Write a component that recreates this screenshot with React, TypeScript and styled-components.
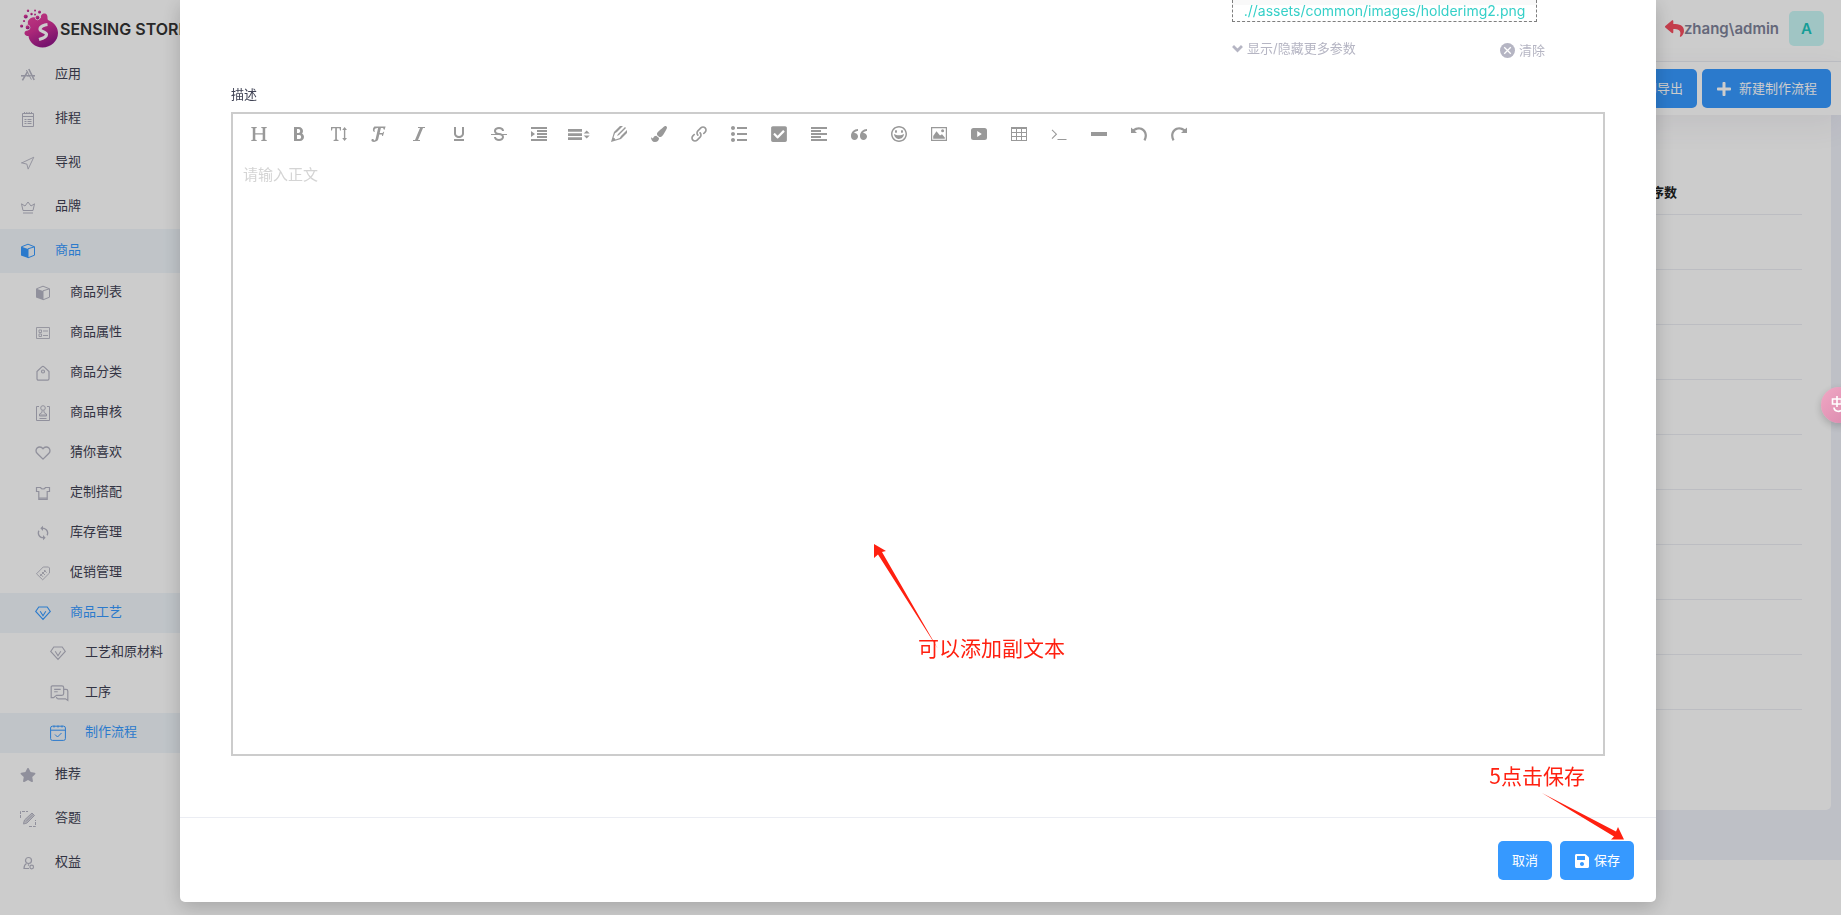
import React from 'react';
import styled, { createGlobalStyle } from 'styled-components';
import {
  ImBold, ImItalic, ImUnderline, ImStrikethrough, ImIndentIncrease, ImPencil2, ImLink, ImList2,
  ImParagraphLeft, ImQuotesLeft, ImHappy, ImTable2,
} from 'react-icons/im';
import { FaPaintBrush, FaPlus, FaReply, FaSave, FaStar, FaCheckSquare } from 'react-icons/fa';
import { FiHeart, FiNavigation } from 'react-icons/fi';
import { MdSync } from 'react-icons/md';

const GlobalStyle = createGlobalStyle`
  *, *::before, *::after { box-sizing: border-box; }
  body {
    margin: 0;
    background: #eef0f8;
    color: #3f4254;
    font-family: Inter, "Noto Sans CJK SC", sans-serif;
    font-size: 13px;
    line-height: 20px;
  }
  button, textarea { font: inherit; }
  a { text-decoration: none; color: inherit; }
`;

const Page = styled.div`
  display: flex;
  min-height: 100vh;
`;

const Aside = styled.aside`
  flex: 0 0 260px;
  background: #fff;
`;

const Brand = styled.a`
  display: flex;
  align-items: center;
  gap: 1px;
  height: 53px;
  padding: 4px 0 0 20px;
  color: #333;
  font-size: 16px;
  font-weight: 600;
  white-space: nowrap;
`;

const MenuLink = styled.a<{ $level: number; $active?: boolean }>`
  display: flex;
  align-items: center;
  gap: 19px;
  height: ${p => (p.$level ? 40 : 44)}px;
  padding-bottom: 4px;
  padding-left: ${p => 20 + p.$level * 15}px;
  background: ${p => (p.$active ? '#f0f6fb' : 'transparent')};
  color: ${p => (p.$active ? '#3699ff' : '#3f4254')};
`;

const MenuIcon = styled.span<{ $active?: boolean }>`
  display: flex;
  width: 16px;
  padding-top: 4px;
  color: ${p => (p.$active ? '#3699ff' : '#b5b5c3')};
  svg { flex: none; }
`;

const Main = styled.main`
  flex: 1;
  display: flex;
  flex-direction: column;
  min-width: 0;
`;

const Header = styled.header`
  display: flex;
  align-items: center;
  justify-content: flex-end;
  height: 62px;
  padding: 0 17px 4px 0;
  border-bottom: 1px solid #ebedf3;
  background: #fff;
`;

const UserName = styled.span`
  color: #7e8299;
  font-size: 15px;
  font-weight: 600;
`;

const ReplyLink = styled.a`
  display: flex;
  color: #f64e60;
`;

const Avatar = styled.span`
  display: grid;
  place-items: center;
  width: 35px;
  height: 35px;
  margin-left: 10px;
  border-radius: 5px;
  background: #c9f7f5;
  color: #1bc5bd;
  font-size: 15px;
  font-weight: 600;
`;

const SubHeader = styled.div`
  position: relative;
  display: flex;
  align-items: center;
  justify-content: flex-end;
  gap: 5px;
  height: 53px;
  padding-right: 10px;
  background: #fff;
  box-shadow: 0 10px 30px rgba(82, 63, 105, 0.08);
`;

const PrimaryButton = styled.button<{ $gap?: number }>`
  display: inline-flex;
  align-items: center;
  gap: ${p => p.$gap ?? 0}px;
  height: 39px;
  padding: 0 14px 2px;
  border: 0;
  border-radius: 5px;
  background: #3699ff;
  color: #fff;
  cursor: pointer;
  svg { margin-top: 2px; }
`;

const Content = styled.section`
  flex: 1;
  display: flex;
  padding: 0 10px 50px;
`;

const Card = styled.div`
  flex: 1;
  padding: 56px 29px 0;
  border-radius: 0 0 5px 5px;
  background: #fff;
`;

const Table = styled.table`
  width: 100%;
  border-collapse: collapse;
  text-align: left;
  th { height: 43px; padding: 0; border-bottom: 1px solid #ebedf3; color: #212121; font-weight: 600; }
  td { height: 55px; padding: 0; border-bottom: 1px solid #ebedf3; }
  th:last-child { width: 164px; }
`;

const PageFooter = styled.footer`
  height: 55px;
  background: #fff;
`;

const Overlay = styled.div`
  position: fixed;
  inset: 0;
  overflow: auto;
  padding: 0 185px 13px 180px;
  background: rgba(0, 0, 0, 0.2);
`;

const Dialog = styled.div`
  position: relative;
  border-radius: 0 0 5px 5px;
  background: #fff;
  box-shadow: 0 5px 20px rgba(0, 0, 0, 0.2);
`;

const DialogBody = styled.div`
  padding: 0 51px 61px;
`;

const Upload = styled.div`
  width: 313px;
  margin: 0 60px 24px auto;
`;

const UploadBox = styled.div`
  width: 305px;
  height: 22px;
  margin-bottom: 18px;
  border: 1px dashed #7e7e7e;
  border-top: 0;
  background: linear-gradient(#f9f9f9 5px, #fff 5px);
  color: #36d0c8;
  font-size: 14px;
  line-height: 22px;
  text-align: center;
  white-space: nowrap;
`;

const UploadActions = styled.div`
  display: flex;
  align-items: flex-start;
  justify-content: space-between;
`;

const TextButton = styled.button<{ $line: number }>`
  display: flex;
  align-items: center;
  gap: 4px;
  padding: 0;
  border: 0;
  background: none;
  color: #b5b5c3;
  line-height: ${p => p.$line}px;
  cursor: pointer;
`;

const Label = styled.label`
  display: block;
  margin-bottom: 8px;
`;

const Editor = styled.div`
  border: 2px solid #ccc;
`;

const Toolbar = styled.div`
  display: flex;
  flex-wrap: wrap;
  padding: 0 6px;
`;

const ToolButton = styled.button`
  display: grid;
  place-items: center;
  width: 40px;
  height: 40px;
  padding: 0;
  border: 0;
  background: none;
  color: #999;
  cursor: pointer;
`;

const EditorText = styled.textarea`
  display: block;
  width: 100%;
  height: 600px;
  padding: 10px;
  border: 0;
  outline: 0;
  resize: none;
  background: none;
  color: #3f4254;
  font-size: 15px;
  line-height: 22px;
  &::placeholder { color: #d4d4d4; opacity: 1; }
`;

const DialogFooter = styled.footer`
  display: flex;
  justify-content: flex-end;
  gap: 8px;
  padding: 23px 22px 22px;
  border-top: 1px solid #ebedf3;
`;

const Note = styled.p<{ $right: number; $bottom: number }>`
  position: absolute;
  right: ${p => p.$right}px;
  bottom: ${p => p.$bottom}px;
  margin: 0;
  color: #ff2010;
  font-family: "Noto Sans CJK SC", sans-serif;
  font-size: 21px;
  line-height: 30px;
  pointer-events: none;
`;

const NoteArrow = styled.svg<{ $right: number; $bottom: number }>`
  position: absolute;
  right: ${p => p.$right}px;
  bottom: ${p => p.$bottom}px;
  fill: #ff2010;
  pointer-events: none;
`;

const FloatButton = styled.button`
  position: fixed;
  top: 387px;
  right: -16px;
  display: grid;
  place-items: center;
  width: 36px;
  height: 36px;
  padding: 0;
  border: 0;
  border-radius: 50%;
  background: linear-gradient(135deg, #f0a8c4, #d987ac);
  box-shadow: 0 3px 8px rgba(0, 0, 0, 0.2);
  cursor: pointer;
`;

type GlyphProps = { children: React.ReactNode; size?: number; fill?: boolean; width?: number };

const Glyph = ({ children, size = 16, fill, width = 1 }: GlyphProps) => (
  <svg
    width={size}
    height={size}
    viewBox="0 0 16 16"
    fill={fill ? 'currentColor' : 'none'}
    stroke={fill ? 'none' : 'currentColor'}
    strokeWidth={width}
    aria-hidden="true"
  >
    {children}
  </svg>
);

const AppsIcon = () => (
  <Glyph width={1.6}><path d="M8.8 2l5.4 11M7.6 4.6L2.4 13.4M1 8.7h3.4M6.6 8.7h3.6M11.6 8.7H15" /><path d="M1 8.7h14M6.4 3l5 9.6" strokeWidth="1" /></Glyph>
);
const ScheduleIcon = () => (
  <Glyph><path d="M2.5 2.5h11v13h-11zM2.5 5.5h11M4.5 1v2M6.8 1v2M9.2 1v2M11.5 1v2M4.5 8.5h2M7.5 8.5h4M4.5 10.5h2M7.5 10.5h4M4.5 12.5h2M7.5 12.5h4" /></Glyph>
);
const CrownIcon = () => (
  <Glyph><path d="M3 11.5L1.5 4.8 5 7l3-4 3 4 3.5-2.2L13 11.5zM3 14h10" /></Glyph>
);
const CubeIcon = () => (
  <Glyph><path d="M1.5 3.8L8 1.2l6.5 2.6v8.4L8 14.8M8 5.8l6.5-2M8 5.8v9" /><path d="M1 3.6l7 2.4v9L1 12.4z" fill="currentColor" stroke="none" /></Glyph>
);
const AttributesIcon = () => (
  <Glyph width={0.9}><path d="M1.5 2.5h13v11h-13zM4 5h2.5v2.5H4zM4 9h2.5v2.5H4zM8 6h5M8 10.5h5" /></Glyph>
);
const CategoryIcon = () => (
  <Glyph width={1.2}><path d="M2 6.5l4.8-4.6a1.6 1.6 0 012.3 0L14 6.5v7.3a1.4 1.4 0 01-1.4 1.4H3.4A1.4 1.4 0 012 13.8z" /><circle cx="8" cy="6.5" r="1.5" /></Glyph>
);
const ReviewIcon = () => (
  <Glyph><path d="M4 1.5H1.5v14h13v-14H12M7 5.5v2L4.5 9v2h7V9L9 7.5v-2M4.5 13.5h7" /><circle cx="8" cy="3" r="2.3" /><path d="M5 9h6v2H5z" fill="currentColor" fillOpacity="0.5" stroke="none" /></Glyph>
);
const ShirtIcon = () => (
  <Glyph width={1.2}><path d="M5.5 2.5H1.5v4h2.3v8h8.4v-8h2.3v-4h-4c-.8 2-4.2 2-5 0zM4 13.2h8" /></Glyph>
);
const TagIcon = () => (
  <Glyph width={0.9}><path d="M1.5 8.8L8.2 2h5.3l1 1v5L7.7 14.8zM5 8.8l3 3M7 7l3 3M9 5l2.6 2.6M5 11l5.5-5.5" /></Glyph>
);
const DiamondIcon = () => (
  <Glyph width={1.1}><path d="M3.8 2h8.4L15.3 6.4 8 14.4.7 6.4zM5.2 6.2l2.8 4.6 2.8-4.6" /></Glyph>
);
const ChatIcon = () => (
  <Glyph size={19}><path d="M2 1.5h8A1.5 1.5 0 0111.5 3v5A1.5 1.5 0 0110 9.5H5.5l-2.5 2H1V2.5a1 1 0 011-1zM3.5 4.5h5.5M3.5 6.5h3M11.5 4.5h2A1.5 1.5 0 0115 6v7.8l-2-1.3H7A1.5 1.5 0 015.5 11" /></Glyph>
);
const CalendarCheckIcon = () => (
  <Glyph><rect x="0.6" y="1.2" width="14.8" height="14.2" rx="1.8" /><path d="M.6 5.2h14.8M4 .5v2M8 .5v2M12 .5v2M5 9.5l2.5 2.5 4-4" /></Glyph>
);
const QuizIcon = () => (
  <Glyph><path d="M.5 7V.5H8M9 15.5h6.5V9" strokeDasharray="3 1" /><path d="M3.5 12.5l1-3.5 7.5-7 2.5 2.5L7 12l-3.5 1zM6 10.5l7-7" fill="currentColor" fillOpacity="0.5" /></Glyph>
);
const PersonIcon = () => (
  <Glyph width={1.2}><circle cx="8.5" cy="5.5" r="3" /><path d="M6.5 8.5C4.8 9.5 4 11 4 13.5h5M8 9.5l1 1" /><circle cx="11.7" cy="12" r="1.8" /></Glyph>
);

const ChevronGlyph = () => (
  <Glyph size={11} width={4}><path d="M1.5 4.5L8 11l6.500-6.500" /></Glyph>
);
const ClearGlyph = () => (
  <Glyph size={15}><circle cx="8" cy="8" r="8" fill="currentColor" stroke="none" /><path d="M4.500 4.500l7 7M11.500 4.500l-7 7" stroke="#fff" strokeWidth="1.400" /></Glyph>
);

const HeadingGlyph = () => (
  <Glyph fill><path d="M.3 1h5.4v1L4.300 2.300v5h7.400v-5L10.300 2V1h5.400v1l-1.500.3v11.400l1.500.3v1h-5.400v-1l1.400-.3V8.500H4.300v5.200l1.400.3v1H.3v-1l1.500-.3V2.300L.3 2z" /></Glyph>
);
const TextHeightGlyph = () => (
  <Glyph fill><path d="M0 1h10v3.400H9L8.500 2.300H5.900v11.200l1.600.4V15H2.600v-1.100l1.600-.4V2.300H1.500L1 4.400H0zM13.600 1L16 4h-1.700v8H16l-2.400 3-2.400-3h1.700V4h-1.700z" /></Glyph>
);
const FontGlyph = () => (
  <Glyph fill><path d="M3.4.6h11.200l-1 3.200h-.8c0-1.200-.5-1.700-2-1.700H9.900L8.700 7h2.900l.9-1.200h.7l-1.200 4.100h-.8l-.3-1.300H8.300l-1 4.500c-.4 1.700-2 2.800-4.200 2.800-1.700 0-2.700-.7-2.700-1.600 0-.8.6-1.300 1.300-1.300.9 0 1.300.6 1.200 1.500 1.100.1 1.500-.4 1.900-2.200L7.100 2.100C5 2 3.500 2.800 3.500 4.200c0 .7.3 1.100.6 1.700-1.400 0-2.200-.8-2.200-2C1.900 2.600 2.400 1.300 3.400.6z" /></Glyph>
);
const RowHeightGlyph = () => (
  <svg width="22" height="16" viewBox="0 0 22 16" fill="currentColor" aria-hidden="true">
    <path d="M0 3h14v2.700H0zM0 7.200h14v2.700H0zM0 11.300h14V14H0zM18.700 4.500L21.700 7.500h-6zM15.700 9.500h6l-3 3z" />
  </svg>
);
const ImageGlyph = () => (
  <Glyph fill><path fillRule="evenodd" d="M0 1h16v14H0zM1.200 2.200v11.600h13.600V2.200zM2.200 12.800V10L5.500 5.300 9 9.500l2-1.300 2.800 3.300v1.300z" /><circle cx="11.600" cy="4.700" r="1.500" /></Glyph>
);
const VideoGlyph = () => (
  <Glyph fill><path fillRule="evenodd" d="M2.500 2h11A2.500 2.500 0 0116 4.500v7a2.500 2.500 0 01-2.500 2.500h-11A2.500 2.500 0 010 11.500v-7A2.500 2.500 0 012.500 2zM6.200 5v6l4.600-3z" /></Glyph>
);
const TerminalGlyph = () => (
  <Glyph width={1.1}><path d="M1 3.800l4.400 4.400L1 12.600M6.500 13.500H15.500" /></Glyph>
);
const SplitLineGlyph = () => (
  <Glyph fill><path d="M0 6h16v4H0z" /></Glyph>
);
const undoPath = 'M0 1.500L2 3.300C5.500.3 10.500.5 13.400 3.400c3 3 3.300 7.600 1 11.600L12.500 13.800c1.800-3.200 1.500-6.500-.6-8.600-2.200-2.200-5.500-2.300-8-.2L6 7H0z';
const UndoGlyph = () => (
  <Glyph fill><path d={undoPath} /></Glyph>
);
const RedoGlyph = () => (
  <Glyph fill><path d={undoPath} transform="matrix(-1 0 0 1 16 0)" /></Glyph>
);

const Logo = () => (
  <svg width="39" height="40" viewBox="0 0 39 40" aria-hidden="true">
    <defs>
      <linearGradient id="logo" x1="0" y1="0" x2="0.5" y2="1">
        <stop offset="0" stopColor="#f04aa4" />
        <stop offset="0.5" stopColor="#d83297" />
        <stop offset="1" stopColor="#96188a" />
      </linearGradient>
    </defs>
    <g fill="url(#logo)">
      <path d="M8 12c2-4 7-5 10-2l3-1c-1-4 4-6 6-3 1 2 0 4 1 5 7 3 10 8 10 13 0 8-7 14.500-15.500 14.500C15 38.500 9 33 8.500 27c-3 0-5-2-3.500-4.500 1-1 3-1 4-2 1-2-2-5-1-8.500z" />
      <circle cx="17.500" cy="8.500" r="2.200" /><circle cx="5.700" cy="7.500" r="2" /><circle cx="8" cy="18" r="2.500" />
      <circle cx="1.600" cy="17" r="1.600" /><circle cx="8" cy="1.800" r="1.200" /><circle cx="15" cy="1.500" r="1" />
      <circle cx="19.500" cy="3" r="1.500" /><circle cx="11.500" cy="5" r="1.200" /><circle cx="4" cy="12" r="1.100" /><circle cx="15" cy="5.500" r="1" />
    </g>
    <circle cx="17.500" cy="8.500" r="2.300" fill="none" stroke="#fff" strokeWidth="0.800" />
    <circle cx="7.500" cy="18.500" r="2.500" fill="none" stroke="#fff" strokeWidth="0.800" />
    <path d="M27.500 15.500c-3 .3-7.500 2-7.500 4.800 0 2.500 6.500 2.500 6.500 5.200 0 2.200-4 4-7.500 5" fill="none" stroke="#fff" strokeWidth="3.200" />
  </svg>
);

const menu: { label: string; icon: React.ReactNode; level: number; active?: boolean }[] = [
  { label: '应用', icon: <AppsIcon />, level: 0 },
  { label: '排程', icon: <ScheduleIcon />, level: 0 },
  { label: '导视', icon: <FiNavigation size={15} strokeWidth={1.5} />, level: 0 },
  { label: '品牌', icon: <CrownIcon />, level: 0 },
  { label: '商品', icon: <CubeIcon />, level: 0, active: true },
  { label: '商品列表', icon: <CubeIcon />, level: 1 },
  { label: '商品属性', icon: <AttributesIcon />, level: 1 },
  { label: '商品分类', icon: <CategoryIcon />, level: 1 },
  { label: '商品审核', icon: <ReviewIcon />, level: 1 },
  { label: '猜你喜欢', icon: <FiHeart size={16} />, level: 1 },
  { label: '定制搭配', icon: <ShirtIcon />, level: 1 },
  { label: '库存管理', icon: <MdSync size={16} />, level: 1 },
  { label: '促销管理', icon: <TagIcon />, level: 1 },
  { label: '商品工艺', icon: <DiamondIcon />, level: 1, active: true },
  { label: '工艺和原材料', icon: <DiamondIcon />, level: 2 },
  { label: '工序', icon: <ChatIcon />, level: 2 },
  { label: '制作流程', icon: <CalendarCheckIcon />, level: 2, active: true },
  { label: '推荐', icon: <FaStar size={16} />, level: 0 },
  { label: '答题', icon: <QuizIcon />, level: 0 },
  { label: '权益', icon: <PersonIcon />, level: 0 },
];

const tools: [string, React.ReactNode][] = [
  ['标题', <HeadingGlyph />],
  ['加粗', <ImBold size={16} />],
  ['字号', <TextHeightGlyph />],
  ['字体', <FontGlyph />],
  ['斜体', <ImItalic size={16} />],
  ['下划线', <ImUnderline size={16} />],
  ['删除线', <ImStrikethrough size={16} />],
  ['缩进', <ImIndentIncrease size={16} />],
  ['行高', <RowHeightGlyph />],
  ['文字颜色', <ImPencil2 size={16} />],
  ['背景色', <FaPaintBrush size={16} />],
  ['链接', <ImLink size={16} />],
  ['列表', <ImList2 size={16} />],
  ['待办事项', <FaCheckSquare size={18} />],
  ['对齐', <ImParagraphLeft size={16} />],
  ['引用', <ImQuotesLeft size={16} />],
  ['表情', <ImHappy size={16} />],
  ['图片', <ImageGlyph />],
  ['视频', <VideoGlyph />],
  ['表格', <ImTable2 size={16} />],
  ['代码', <TerminalGlyph />],
  ['分割线', <SplitLineGlyph />],
  ['撤销', <UndoGlyph />],
  ['恢复', <RedoGlyph />],
];

const rows = Array.from({ length: 9 }, (_, i) => i);

export default function App() {
  return (
    <>
      <GlobalStyle />
      <Page>
        <Aside>
          <Brand href="#"><Logo />SENSING STORE</Brand>
          <nav>
            {menu.map(item => (
              <MenuLink key={item.label} href="#" $level={item.level} $active={item.active}>
                <MenuIcon $active={item.active}>{item.icon}</MenuIcon>
                {item.label}
              </MenuLink>
            ))}
          </nav>
        </Aside>
        <Main>
          <Header>
            <ReplyLink href="#" aria-label="返回"><FaReply size={19} /></ReplyLink>
            <UserName>zhang\admin</UserName>
            <Avatar>A</Avatar>
          </Header>
          <SubHeader>
            <PrimaryButton type="button">打印导出</PrimaryButton>
            <PrimaryButton type="button" $gap={7}><FaPlus size={16} />新建制作流程</PrimaryButton>
          </SubHeader>
          <Content>
            <Card>
              <Table>
                <thead><tr><th /><th>工序数</th></tr></thead>
                <tbody>{rows.map(row => <tr key={row}><td /><td /></tr>)}</tbody>
              </Table>
            </Card>
          </Content>
          <PageFooter />
        </Main>
      </Page>

      <Overlay>
        <Dialog role="dialog" aria-modal="true">
          <DialogBody>
            <Upload>
              <UploadBox><a href="#">.//assets/common/images/holderimg2.png</a></UploadBox>
              <UploadActions>
                <TextButton type="button" $line={16}><ChevronGlyph />显示/隐藏更多参数</TextButton>
                <TextButton type="button" $line={20}><ClearGlyph />清除</TextButton>
              </UploadActions>
            </Upload>
            <Label htmlFor="description">描述</Label>
            <Editor>
              <Toolbar>
                {tools.map(([name, icon]) => (
                  <ToolButton key={name} type="button" aria-label={name}>{icon}</ToolButton>
                ))}
              </Toolbar>
              <EditorText id="description" placeholder="请输入正文" />
            </Editor>
          </DialogBody>
          <DialogFooter>
            <PrimaryButton type="button">取消</PrimaryButton>
            <PrimaryButton type="button" $gap={4}><FaSave size={16} />保存</PrimaryButton>
          </DialogFooter>
          <NoteArrow $right={718} $bottom={253} width="64" height="105" viewBox="0 0 64 105" aria-hidden="true">
            <path d="M0 0l12 7-4 1 56 97L4 10.5 0 14z" />
          </NoteArrow>
          <Note $right={591} $bottom={240}>可以添加副文本</Note>
          <Note $right={71} $bottom={112}>5点击保存</Note>
          <NoteArrow $right={31} $bottom={62} width="83" height="47" viewBox="0 0 83 47" aria-hidden="true">
            <path d="M0 0l74 38.5L76 34l6 12.500H69l3-3z" />
          </NoteArrow>
        </Dialog>
      </Overlay>

      <FloatButton type="button" aria-label="翻译">
        <svg width="20" height="20" viewBox="0 0 20 20" fill="none" stroke="#fff" strokeWidth="1.600" aria-hidden="true">
          <path d="M3.500 4h9v5h-9zM8 1v11M5 12.500c0 4 5 4.500 7 3" />
        </svg>
      </FloatButton>
    </>
  );
}
